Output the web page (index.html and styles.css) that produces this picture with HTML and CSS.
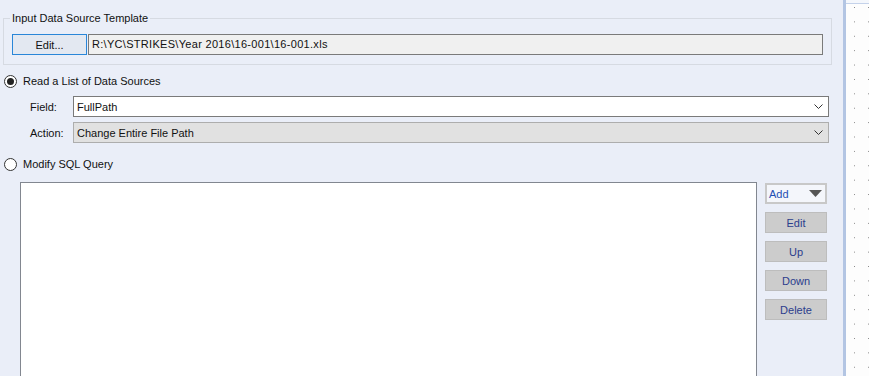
FILE: index.html
```html
<!DOCTYPE html>
<html lang="en">
<head>
  <meta charset="UTF-8" />
  <title>Input Data Source Template</title>
  <link rel="stylesheet" href="styles.css">
</head>
<body>
  <div class="app">
    <div class="panel">
      <fieldset class="group">
        <legend>Input Data Source Template</legend>
        <div class="template-row">
          <button class="edit-btn">Edit...</button>
          <div class="path-box">R:\YC\STRIKES\Year 2016\16-001\16-001.xls</div>
        </div>
      </fieldset>

      <div class="radio-row first">
        <span class="radio checked"></span>
        <span>Read a List of Data Sources</span>
      </div>

      <div class="form-row field-row">
        <label>Field:</label>
        <div class="select">
          <span>FullPath</span>
          <svg class="chevron" width="9" height="6" viewBox="0 0 9 6"><polyline points="0.5,0.5 4.5,4.5 8.5,0.5" fill="none" stroke="#333" stroke-width="1"/></svg>
        </div>
      </div>
      <div class="form-row action-row">
        <label>Action:</label>
        <div class="select disabled">
          <span>Change Entire File Path</span>
          <svg class="chevron" width="9" height="6" viewBox="0 0 9 6"><polyline points="0.5,0.5 4.5,4.5 8.5,0.5" fill="none" stroke="#333" stroke-width="1"/></svg>
        </div>
      </div>

      <div class="radio-row second">
        <span class="radio"></span>
        <span>Modify SQL Query</span>
      </div>

      <div class="sql-area">
        <div class="listbox"></div>
        <div class="side-buttons">
          <div class="add-btn">
            <span>Add</span>
            <svg width="13" height="7" viewBox="0 0 13 7"><polygon points="0,0 13,0 6.5,7" fill="#555"/></svg>
          </div>
          <button class="side-btn">Edit</button>
          <button class="side-btn">Up</button>
          <button class="side-btn">Down</button>
          <button class="side-btn">Delete</button>
        </div>
      </div>
    </div>
    <div class="splitter"></div>
    <div class="canvas">
      <div class="canvas-top"></div>
    </div>
  </div>
</body>
</html>
```

FILE: styles.css
```css
:root {
  --bg: #eaeef8;
  --text: #111;
  --font: 'Liberation Sans', Arial, sans-serif;
}

* {
  box-sizing: border-box;
}

body {
  margin: 0;
  font-family: var(--font);
  font-size: 11px;
  color: var(--text);
  background: var(--bg);
  overflow: hidden;
}

.app {
  display: flex;
  height: 376px;
}

.panel {
  width: 843px;
  padding-top: 11px;
  background: var(--bg);
}

.group {
  margin: 0 0 0 3px;
  width: 829px;
  border: 1px solid #d6dae2;
  padding: 9px 8px 9px 8px;
}

.group legend {
  padding: 0 2px;
  margin-left: -2px;
  line-height: 14px;
}

.template-row {
  display: flex;
  gap: 1px;
  height: 21px;
}

.edit-btn {
  width: 75px;
  height: 21px;
  font-family: var(--font);
  font-size: 11px;
  color: #111;
  background: #e3e8f1;
  border: 1px solid #2a86d8;
  padding: 0;
}

.path-box {
  flex: 1;
  background: #f0f0f0;
  border: 1px solid #7a7a7a;
  padding: 2px 3px;
  line-height: 15px;
  letter-spacing: 0.3px;
}

.radio-row {
  display: flex;
  align-items: center;
  gap: 6px;
  padding-left: 4px;
  height: 14px;
}

.radio-row.first {
  margin-top: 9px;
}

.radio-row.second {
  margin-top: 14px;
}

.radio {
  width: 13px;
  height: 13px;
  border: 1px solid #333;
  border-radius: 50%;
  background: #fff;
  display: flex;
  align-items: center;
  justify-content: center;
}

.radio.checked::after {
  content: "";
  width: 7px;
  height: 7px;
  border-radius: 50%;
  background: #222;
}

.form-row {
  display: flex;
  align-items: center;
  padding-left: 30px;
}

.field-row {
  margin-top: 8px;
}

.action-row {
  margin-top: 5px;
}

.form-row label {
  width: 43px;
}

.select {
  width: 756px;
  height: 21px;
  background: #fff;
  border: 1px solid #7a7a7a;
  display: flex;
  align-items: center;
  justify-content: space-between;
  padding: 0 5px 0 3px;
}

.select.disabled {
  background: #e1e1e1;
  border-color: #adadad;
}

.chevron {
  margin-top: 1px;
}

.sql-area {
  display: flex;
  gap: 8px;
  margin-top: 11px;
  padding-left: 20px;
}

.listbox {
  width: 737px;
  height: 200px;
  background: #fff;
  border: 1px solid #828790;
}

.side-buttons {
  display: flex;
  flex-direction: column;
  gap: 8px;
  width: 62px;
  padding-top: 1px;
}

.add-btn {
  height: 21px;
  border: 2px solid #c8c8c8;
  background: #f4f6fb;
  color: #1f4fb4;
  display: flex;
  align-items: center;
  justify-content: space-between;
  padding: 0 3px 0 2px;
}

.side-btn {
  height: 21px;
  padding: 0;
  font-family: var(--font);
  font-size: 11px;
  color: #2b3d8c;
  background: #cccccc;
  border: 1px solid #bdbdbd;
}

.splitter {
  width: 3px;
  background: #b3c5e3;
}

.canvas {
  flex: 1;
  background-color: #fff;
  background-image:
    linear-gradient(to bottom, transparent 1px, #fdfdfd 1px),
    linear-gradient(to right, #8a8a8a 1px, #fdfdfd 1px);
  background-size: 14px 14.4px;
  background-position: 8px 7px;
}

.canvas-top {
  height: 4px;
  background: #f4f7fc;
  border-bottom: 1px solid #c4d2ea;
}
```
